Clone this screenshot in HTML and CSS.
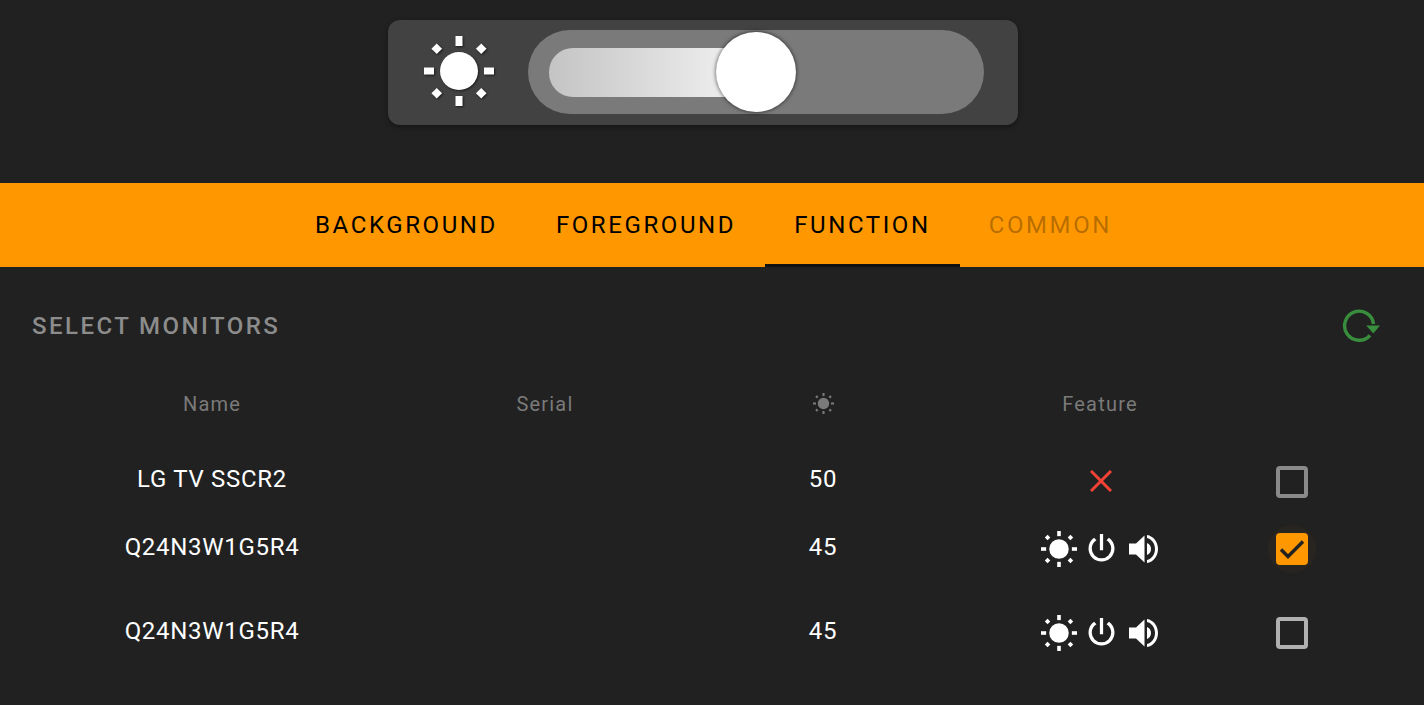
FILE: index.html
```html
<!DOCTYPE html>
<html>
  <head>
    <title>Monitors</title>
    <link rel="stylesheet" href="styles.css">
  </head>
  <body>
    <svg class="defs" width="0" height="0">
      <symbol id="sun" viewBox="0 0 70 70">
        <circle cx="35" cy="35" r="19"/>
        <rect x="31.5" y="0" width="7" height="10"/>
        <rect x="31.5" y="60" width="7" height="10"/>
        <rect x="0" y="31.5" width="10" height="7"/>
        <rect x="60" y="31.5" width="10" height="7"/>
        <rect x="9" y="9" width="7.5" height="7.5" transform="rotate(45 12.75 12.75)"/>
        <rect x="53.5" y="9" width="7.5" height="7.5" transform="rotate(45 57.25 12.75)"/>
        <rect x="9" y="53.5" width="7.5" height="7.5" transform="rotate(45 12.75 57.25)"/>
        <rect x="53.5" y="53.5" width="7.5" height="7.5" transform="rotate(45 57.25 57.25)"/>
      </symbol>
      <symbol id="power" viewBox="0 0 24 24">
        <path d="M13,3H11V13H13M16.56,5.44L15.11,6.89C16.84,7.94 18,9.83 18,12A6,6 0 0,1 12,18A6,6 0 0,1 6,12C6,9.83 7.16,7.94 8.88,6.88L7.44,5.44C5.36,6.88 4,9.28 4,12A8,8 0 0,0 12,20A8,8 0 0,0 20,12C20,9.28 18.64,6.88 16.56,5.44Z"/>
      </symbol>
      <symbol id="volume" viewBox="0 0 30 28">
        <path d="M0,8.5V19.5H7L15.5,27.5V0.5L7,8.5Z"/>
        <path d="M18,8C20.5,9 22,11 22,14C22,17 20.5,19 18,20Z"/>
        <path d="M18,0C24.5,1 29,7 29,14C29,21 24.5,27 18,28V25C22.5,24 26,19.5 26,14C26,8.5 22.5,4 18,3Z"/>
      </symbol>
    </svg>

    <div class="top">
      <div class="brightness-card">
        <svg class="card-sun"><use href="#sun"/></svg>
        <div class="slider">
          <div class="slider-fill"></div>
          <div class="slider-thumb"></div>
        </div>
      </div>
    </div>

    <div class="tabs">
      <div class="tab">BACKGROUND</div>
      <div class="tab">FOREGROUND</div>
      <div class="tab active">FUNCTION</div>
      <div class="tab disabled">COMMON</div>
    </div>

    <div class="section-head">
      <div class="section-title">SELECT MONITORS</div>
      <svg class="refresh" viewBox="0 0 38 34">
        <path d="M28,26.3A14.5,14.5 0 1 1 31.5,15" fill="none" stroke="#388e3c" stroke-width="3.4"/>
        <path d="M24.2,16.5H38L31.3,24.5Z" fill="#388e3c"/>
      </svg>
    </div>

    <div class="monitors">
      <div class="cell head">Name</div>
      <div class="cell head">Serial</div>
      <div class="cell head"><svg class="head-sun"><use href="#sun"/></svg></div>
      <div class="cell head">Feature</div>
      <div class="cell head"></div>

      <div class="cell">LG TV SSCR2</div>
      <div class="cell"></div>
      <div class="cell">50</div>
      <div class="cell">
        <svg class="cross" viewBox="0 0 22 22"><path d="M1,1L21,21M21,1L1,21" stroke="#f44336" stroke-width="3" fill="none"/></svg>
      </div>
      <div class="cell"><div class="checkbox dim"></div></div>

      <div class="cell">Q24N3W1G5R4</div>
      <div class="cell"></div>
      <div class="cell">45</div>
      <div class="cell features">
        <svg class="ic-sun"><use href="#sun"/></svg>
        <svg class="ic-power"><use href="#power"/></svg>
        <svg class="ic-volume"><use href="#volume"/></svg>
      </div>
      <div class="cell">
        <div class="checkbox checked">
          <svg viewBox="0 0 32 32"><path d="M5,16.5L12,23.5L27,8.5" stroke="#212121" stroke-width="3.4" fill="none"/></svg>
        </div>
      </div>

      <div class="cell">Q24N3W1G5R4</div>
      <div class="cell"></div>
      <div class="cell">45</div>
      <div class="cell features">
        <svg class="ic-sun"><use href="#sun"/></svg>
        <svg class="ic-power"><use href="#power"/></svg>
        <svg class="ic-volume"><use href="#volume"/></svg>
      </div>
      <div class="cell"><div class="checkbox"></div></div>
    </div>
  </body>
</html>
```

FILE: styles.css
```css
html, body {
  margin: 0;
  height: 100%;
  overflow: hidden;
}
body {
  background: #212121;
  color: #fff;
  font-family: Roboto, sans-serif;
}
.defs {
  position: absolute;
}
.top {
  height: 183px;
  padding-top: 20px;
  box-sizing: border-box;
  display: flex;
  justify-content: center;
}
.brightness-card {
  width: 630px;
  height: 105px;
  margin-left: -18px;
  background: #424242;
  border-radius: 12px;
  box-shadow: 0 2px 5px rgba(0, 0, 0, 0.4);
  display: flex;
  align-items: center;
  padding-left: 36px;
  box-sizing: border-box;
}
.card-sun {
  width: 70px;
  height: 70px;
  fill: #fff;
  margin-top: -3px;
  filter: drop-shadow(1px 1px 1px rgba(0, 0, 0, 0.6));
}
.slider {
  position: relative;
  width: 456px;
  height: 84px;
  margin-left: 34px;
  margin-top: -1px;
  background: #7a7a7a;
  border-radius: 42px;
  display: flex;
  align-items: center;
  padding-left: 21px;
  box-sizing: border-box;
}
.slider-fill {
  width: 206px;
  height: 49px;
  margin-top: 1px;
  border-radius: 24px 0 0 24px;
  background: linear-gradient(90deg, #c4c4c4, #f4f4f4);
}
.slider-thumb {
  position: absolute;
  left: 188px;
  top: 2px;
  width: 80px;
  height: 80px;
  border-radius: 50%;
  background: #fff;
  box-shadow: 0 0 4px rgba(0, 0, 0, 0.7);
}
.tabs {
  height: 84px;
  background: #ff9800;
  display: flex;
  justify-content: center;
  padding-left: 3px;
}
.tab {
  padding: 0 29px;
  line-height: 84px;
  font-size: 24px;
  font-weight: 450;
  letter-spacing: 2.6px;
  color: #000;
  box-sizing: border-box;
}
.tab.active {
  border-bottom: 3px solid #111;
}
.tab.disabled {
  color: rgba(0, 0, 0, 0.3);
}
.section-head {
  display: flex;
  justify-content: space-between;
  align-items: center;
  height: 118px;
  padding: 0 44px 0 32px;
  box-sizing: border-box;
}
.section-title {
  font-size: 24px;
  font-weight: 500;
  letter-spacing: 2.45px;
  color: #8c8c8c;
}
.refresh {
  width: 38px;
  height: 34px;
}
.monitors {
  display: grid;
  grid-template-columns: 376px 290px 266px 288px 96px;
  grid-template-rows: 62px 64px 72px 96px;
  margin-left: 24px;
}
.cell {
  display: flex;
  align-items: center;
  justify-content: center;
  font-size: 24px;
  letter-spacing: 0.7px;
}
.cell.head {
  height: 38px;
  font-size: 20px;
  letter-spacing: 1.2px;
  color: #7a7a7a;
}
.head-sun {
  width: 21px;
  height: 21px;
  margin-top: -2px;
  fill: #7a7a7a;
}
.cross {
  width: 22px;
  height: 22px;
  margin: 4px 0 0 2px;
}
.features {
  padding: 3px 1px 0 0;
  box-sizing: border-box;
}
.ic-sun {
  width: 36px;
  height: 36px;
  fill: #fff;
}
.ic-power {
  width: 39px;
  height: 39px;
  fill: #fff;
  margin: 0 8px 0 5px;
}
.ic-volume {
  width: 30px;
  height: 28px;
  fill: #fff;
}
.checkbox {
  position: relative;
  width: 32px;
  height: 32px;
  border: 4px solid #b0b0b0;
  border-radius: 4px;
  box-sizing: border-box;
  margin-top: 4px;
}
.checkbox.dim {
  border-color: #8a8a8a;
  margin-top: 6px;
}
.checkbox.checked {
  background: #ff9800;
  border: none;
}
.checkbox.checked::before {
  content: "";
  position: absolute;
  left: -8px;
  top: -8px;
  width: 48px;
  height: 48px;
  border-radius: 50%;
  background: rgba(255, 152, 0, 0.035);
}
.checkbox svg {
  position: relative;
  display: block;
  width: 32px;
  height: 32px;
}
```
